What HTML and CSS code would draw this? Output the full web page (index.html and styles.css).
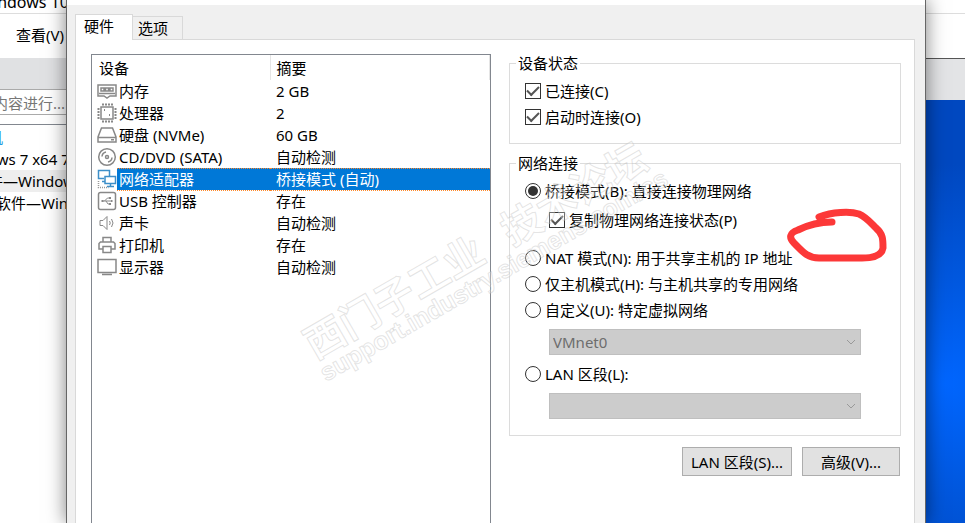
FILE: index.html
```
<!DOCTYPE html>
<html lang="zh-CN">
  <head>
    <meta charset="UTF-8" />
    <meta name="viewport" content="width=device-width, initial-scale=1.0" />
    <title>虚拟机设置</title>
    <link rel="stylesheet" href="styles.css">
  </head>
  <body>
    <!-- Main window behind the dialog -->
    <div class="main-window">
      <div class="title-bar"><span>indows 10</span></div>
      <nav class="menu-bar"><button type="button">查看(V)</button></nav>
      <div class="workspace">
        <aside class="library">
          <div class="library-head"></div>
          <input class="search" type="text" value="内容进行..." aria-label="搜索" />
          <ul class="machines">
            <li class="root">机</li>
            <li>ows 7 x64 7</li>
            <li class="current">件—Windows</li>
            <li class="child">软件—Windows</li>
          </ul>
        </aside>
        <div class="guest"></div>
      </div>
    </div>

    <!-- Settings dialog -->
    <main class="dialog">
      <div class="dialog-title"></div>
      <div class="tabs" role="tablist">
        <button class="tab active" type="button" role="tab" aria-selected="true">硬件</button>
        <button class="tab" type="button" role="tab" aria-selected="false">选项</button>
      </div>

      <div class="panel" role="tabpanel">
        <div class="device-list">
          <table>
            <colgroup>
              <col class="icon-col" />
              <col class="name-col" />
              <col />
            </colgroup>
            <thead>
              <tr>
                <th class="device-head" colspan="2">设备</th>
                <th>摘要</th>
              </tr>
            </thead>
            <tbody>
              <tr>
                <td class="icon">
                  <svg viewBox="0 0 20 20"><path d="M1 4h18v11h-6l-3 2-3-2H1z" /><path d="M4 7h3v3H4zM8.500 7h3v3h-3zM13 7h3v3h-3zM2 12.500h16" /></svg>
                </td>
                <td>内存</td>
                <td>2 GB</td>
              </tr>
              <tr>
                <td class="icon">
                  <svg viewBox="0 0 20 20"><path d="M4 4h12v12H4z" /><path class="pins" d="M5 1.500h11M5 18.500h11M1.500 5v11M18.500 5v11" /><path class="dots" d="M7 7h1M12 12h1" /></svg>
                </td>
                <td>处理器</td>
                <td>2</td>
              </tr>
              <tr>
                <td class="icon">
                  <svg viewBox="0 0 20 20"><path d="M4.500 3h11l3.500 9v5H1v-5zM1 12.500h18M14 14.800h3" /></svg>
                </td>
                <td>硬盘 (NVMe)</td>
                <td>60 GB</td>
              </tr>
              <tr>
                <td class="icon">
                  <svg viewBox="0 0 20 20"><circle cx="10" cy="10" r="8.300" /><circle cx="10" cy="10" r="1.500" /><path d="M5 9.500a5 5 0 0 1 4-4.500M15 10.500a5 5 0 0 1-4 4.500" /></svg>
                </td>
                <td>CD/DVD (SATA)</td>
                <td>自动检测</td>
              </tr>
              <tr class="selected">
                <td class="icon">
                  <svg viewBox="0 0 20 20"><path d="M7 9.500H1.500v-8h11V7M5 12.500h3M8 7.500h10.500v7H8zM13.500 14.500v3M10 17.500h7" /><path class="dotted" d="M1.500 12v6.500h10" /></svg>
                </td>
                <td>网络适配器</td>
                <td>桥接模式 (自动)</td>
              </tr>
              <tr>
                <td class="icon">
                  <svg viewBox="0 0 20 20"><rect x="1.500" y="1.500" width="17" height="17" rx="2" /><path class="thin" d="M5 10h10M7.500 10l3-3h2M9 10l2 3h2" /><path class="dots" d="M4.500 10h2M12 7h2M12 13h2M14 10h1.500" /></svg>
                </td>
                <td>USB 控制器</td>
                <td>存在</td>
              </tr>
              <tr>
                <td class="icon">
                  <svg viewBox="0 0 20 20"><path class="thin" d="M3 7.500h3l4-4v13l-4-4H3zM12.500 8q1.500 2 0 4M14.500 6q3 4 0 8" /></svg>
                </td>
                <td>声卡</td>
                <td>自动检测</td>
              </tr>
              <tr>
                <td class="icon">
                  <svg viewBox="0 0 20 20"><path d="M6 7V2.500h8V7M6 14H2V8.500L3.500 7h13L18 8.500V14h-4M6 11.500h8v6H6z" /></svg>
                </td>
                <td>打印机</td>
                <td>存在</td>
              </tr>
              <tr>
                <td class="icon">
                  <svg viewBox="0 0 20 20"><path d="M1 2.500h18v13H1zM5 17.500h10" /></svg>
                </td>
                <td>显示器</td>
                <td>自动检测</td>
              </tr>
            </tbody>
          </table>
        </div>

        <form class="settings">
          <fieldset class="status">
            <legend>设备状态</legend>
            <label class="option"><input type="checkbox" checked />已连接(C)</label>
            <label class="option"><input type="checkbox" checked />启动时连接(O)</label>
          </fieldset>

          <fieldset class="network">
            <legend>网络连接</legend>
            <label class="option"><input type="radio" name="net" checked />桥接模式(B): 直接连接物理网络</label>
            <label class="option nested"><input type="checkbox" checked />复制物理网络连接状态(P)</label>
            <label class="option"><input type="radio" name="net" />NAT 模式(N): 用于共享主机的 IP 地址</label>
            <label class="option"><input type="radio" name="net" />仅主机模式(H): 与主机共享的专用网络</label>
            <label class="option"><input type="radio" name="net" />自定义(U): 特定虚拟网络</label>
            <div class="dropdown">
              <select disabled aria-label="特定虚拟网络"><option>VMnet0</option></select>
              <svg viewBox="0 0 10 6"><path d="M1 1l4 4 4-4" /></svg>
            </div>
            <label class="option"><input type="radio" name="net" />LAN 区段(L):</label>
            <div class="dropdown">
              <select disabled aria-label="LAN 区段"><option></option></select>
              <svg viewBox="0 0 10 6"><path d="M1 1l4 4 4-4" /></svg>
            </div>
          </fieldset>

          <div class="actions">
            <button class="lan" type="button">LAN 区段(S)...</button>
            <button class="advanced" type="button">高级(V)...</button>
          </div>
        </form>
      </div>
    </main>

    <!-- Watermark and pen mark -->
    <svg class="overlay" viewBox="0 0 965 523">
      <g class="watermark">
        <text class="forum" transform="translate(315 360) rotate(-30)">西门子工业&nbsp;&nbsp;&nbsp;技术论坛</text>
        <text class="site" transform="translate(326 382) rotate(-30)">support.industry.siemens.com/cs</text>
      </g>
      <path class="pen" d="M832 222C816 222 806 226 798 230C789 233 789 238 794 243C802 251 807 258 819 258H862C876 258 882 254 883 248C883 239 883 234 876 228C870 222 866 217 859 214C850 211 832 212 819 217" />
    </svg>
  </body>
</html>
```

FILE: styles.css
```
* {
  box-sizing: border-box;
}

body {
  margin: 0;
  height: 100vh;
  overflow: hidden;
  position: relative;
  font-family: "Noto Sans", "Noto Sans CJK SC", sans-serif;
  font-size: 15px;
  line-height: 22px;
  color: #000;
  background: #fff;
}

button,
input,
select {
  font: inherit;
  color: inherit;
}

/* Main window */
.main-window {
  height: 100%;
  display: flex;
  flex-direction: column;
}

.title-bar {
  height: 14px;
  border-bottom: 1px solid #ddd;
  display: flex;
  align-items: flex-end;
  overflow: hidden;
  font-size: 16px;
}

.title-bar span {
  margin-left: -7px;
}

.menu-bar {
  height: 44px;
  padding: 10px 16px;
}

.menu-bar button {
  border: 0;
  padding: 0;
  background: none;
}

.workspace {
  flex: 1;
  display: flex;
  justify-content: space-between;
}

.library {
  width: 120px;
  background: #fff;
  white-space: nowrap;
}

.library-head {
  height: 31px;
  background: #e0e1e3;
}

.search {
  width: 100%;
  height: 26px;
  display: block;
  margin-left: -10px;
  padding: 0 2px;
  border: 1px solid #aaa;
  color: #777;
}

.machines {
  margin: 9px 0 0;
  padding: 1px 0;
  border-top: 1px solid #82878f;
  list-style: none;
}

.machines li {
  margin-left: -12px;
}

.machines .child {
  padding-left: 8px;
}

.machines .root {
  color: #1e9ae0;
}

.machines .current {
  background: #eee;
}

.guest {
  width: 50px;
  border-top: 1px solid #555;
  background:
    linear-gradient(#e3e4e6, #e3e4e6) top / 100% 41px no-repeat,
    radial-gradient(circle at 60% 70%, #0066ff, #0058e0 100px, #0048c0 220px);
}

/* Dialog */
.dialog {
  position: absolute;
  top: 0;
  bottom: 0;
  left: 66px;
  right: 39px;
  display: flex;
  flex-direction: column;
  border: solid #666;
  border-width: 0 1px;
  background: #f0f0f0;
  box-shadow: 0 0 18px rgba(0, 0, 0, 0.5);
}

.dialog-title {
  height: 5px;
  background: #fff;
}

.tabs {
  display: flex;
  align-items: flex-end;
  height: 35px;
  padding-left: 8px;
}

.tab {
  height: 24px;
  width: 50px;
  padding: 0 0 1px 5px;
  border: 1px solid #d9d9d9;
  border-left: 0;
  text-align: left;
  background: #f0f0f0;
}

.tab.active {
  z-index: 1;
  height: 26px;
  width: 58px;
  padding: 0 0 4px 8px;
  border-left: 1px solid #d9d9d9;
  border-bottom: 0;
  background: #fff;
}

.panel {
  flex: 1;
  display: grid;
  grid-template-columns: 400fr 392fr;
  gap: 18px;
  margin: -1px 10px 0 8px;
  padding: 14px 13px 0 15px;
  border: 1px solid #d9d9d9;
  border-bottom: 0;
  background: #fff;
}

/* Device table */
.device-list {
  border: 1px solid #82878f;
  border-bottom: 0;
  background: #fff;
}

table {
  width: 100%;
  table-layout: fixed;
  border-collapse: collapse;
}

.icon-col {
  width: 25px;
}

.name-col {
  width: 153px;
}

th {
  height: 25px;
  padding: 0 6px;
  border-right: 1px solid #e5e5e5;
  font-weight: normal;
  text-align: left;
}

.device-head {
  padding-left: 7px;
}

td {
  height: 22px;
  padding: 0 0 0 6px;
  line-height: 20px;
  white-space: nowrap;
}

td.icon {
  padding: 0 0 0 5px;
}

td.icon + td {
  padding-left: 2px;
}

td svg {
  display: block;
  width: 20px;
  height: 20px;
  fill: none;
  stroke: #888;
  stroke-width: 1.500;
}

.thin {
  stroke-width: 1;
}

.pins {
  stroke-width: 2;
  stroke-dasharray: 2 1;
}

.dots {
  stroke-width: 2;
}

.selected svg {
  stroke: #3d8fc9;
}

.dotted {
  stroke: #999;
  stroke-dasharray: 1 1;
}

.selected td:not(.icon) {
  color: #fff;
  background: #0078d7;
  border: 1px dotted #ff8728;
  border-width: 1px 0;
}

/* Settings form */
.settings {
  min-width: 0;
}

fieldset {
  margin: 0 0 10px;
  padding: 6px 15px 13px;
  border: 1px solid #dcdcdc;
}

.network {
  margin-bottom: 11px;
  padding-bottom: 10px;
}

legend {
  margin-left: -9px;
  padding: 0 2px;
  line-height: 18px;
}

.option {
  display: flex;
  align-items: center;
  gap: 4px;
  height: 26px;
  white-space: nowrap;
}

.nested {
  margin: 3px 0 12px 24px;
}

.option input {
  appearance: none;
  display: grid;
  place-items: center;
  width: 16px;
  height: 16px;
  margin: 0;
  border: 1px solid #333;
  background: #fff;
}

.option input[type="radio"] {
  border-radius: 50%;
}

.option input[type="checkbox"]:checked::before {
  content: "";
  width: 10px;
  height: 5px;
  margin-bottom: 3px;
  border: solid #555;
  border-width: 0 0 2px 2px;
  transform: rotate(-45deg);
}

.option input[type="radio"]:checked::before {
  content: "";
  width: 10px;
  height: 10px;
  border-radius: 50%;
  background: #333;
}

.dropdown {
  display: grid;
  align-items: center;
  margin: 6px 24px 6px 24px;
}

.dropdown select,
.dropdown svg {
  grid-area: 1 / 1;
}

.dropdown select {
  appearance: none;
  width: 100%;
  height: 26px;
  padding: 0 3px;
  border: 1px solid #bfbfbf;
  border-radius: 0;
  color: #6d6d6d;
  background: #ccc;
  opacity: 1;
}

.dropdown svg {
  justify-self: end;
  width: 10px;
  height: 6px;
  margin-right: 5px;
  fill: none;
  stroke: #999;
}

.actions {
  display: flex;
  justify-content: flex-end;
  gap: 10px;
  padding-right: 1px;
}

.actions button {
  height: 29px;
  padding: 0;
  border: 1px solid #adadad;
  background: #e1e1e1;
}

.lan {
  width: 110px;
}

.advanced {
  width: 98px;
}

/* Marks over the dialog */
.overlay {
  position: absolute;
  top: 0;
  left: 0;
  width: 965px;
  height: 523px;
  pointer-events: none;
}

.watermark {
  fill: #fff;
  fill-opacity: 0.3;
  stroke: #bbb;
  stroke-opacity: 0.4;
}

.forum {
  font: bold 40px "Noto Sans CJK SC", sans-serif;
}

.site {
  font: bold 25px "Liberation Sans", sans-serif;
}

.pen {
  fill: none;
  stroke: #fc3838;
  stroke-width: 7;
  stroke-linecap: round;
  stroke-linejoin: round;
}
```
